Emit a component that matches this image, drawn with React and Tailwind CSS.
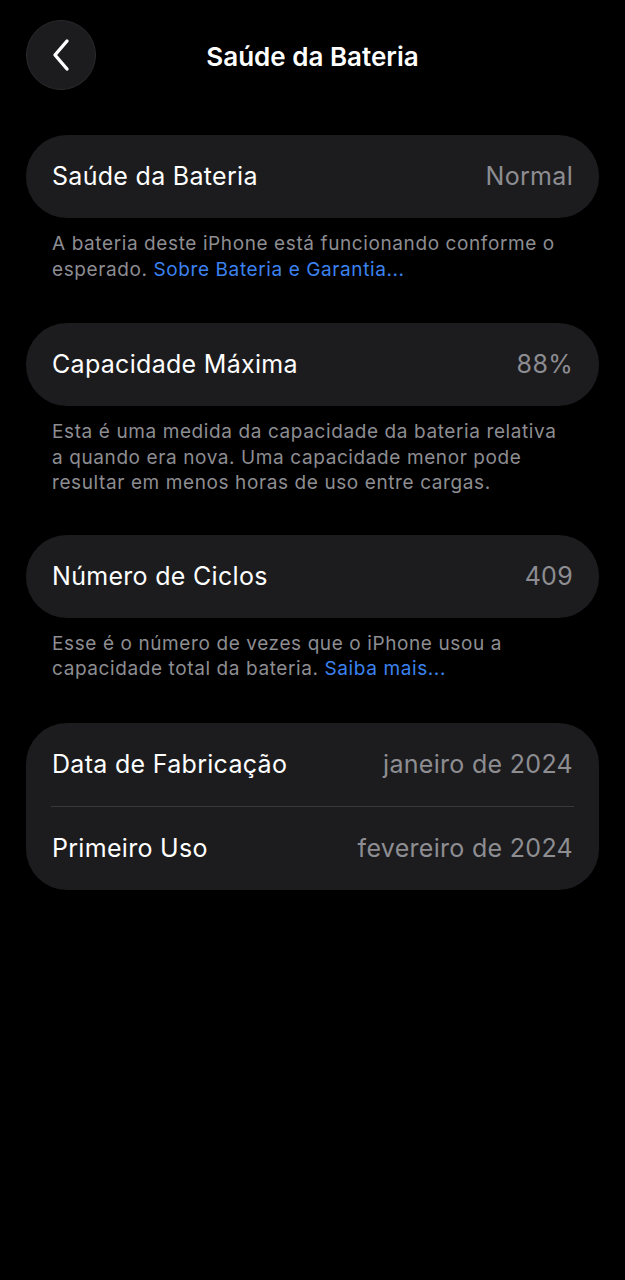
import React from "react";

const font = { fontFamily: "Inter, 'Noto Sans', sans-serif" };

function Row({ label, value }) {
  return (
    <div className="flex h-[83px] items-center justify-between px-[26px] pt-px">
      <span className="text-[25px] tracking-[0.3px] text-white">{label}</span>
      <span className="text-[25px] tracking-[0.3px] text-[#8d8d92]">{value}</span>
    </div>
  );
}

function Footer({ children }) {
  return (
    <div className="mt-[13px] px-[26px] text-[19px] leading-[25.5px] tracking-[0.6px] text-[#8d8d92]">
      {children}
    </div>
  );
}

export default function App() {
  return (
    <div className="min-h-[1280px] w-full bg-black" style={font}>
      <div className="relative flex h-[110px] items-start justify-center pt-[20px]">
        <div className="absolute left-[26px] top-[20px] flex h-[70px] w-[70px] items-center justify-center rounded-full border border-[#2a2a2c] bg-[#1c1c1e]">
          <svg width="22" height="34" viewBox="0 0 22 34" fill="none">
            <path d="M17 3 L5 17 L17 31" stroke="white" strokeWidth="3.4" strokeLinecap="round" strokeLinejoin="round" />
          </svg>
        </div>
        <div className="flex h-[72px] items-center text-[26px] font-semibold text-white">
          Saúde da Bateria
        </div>
      </div>

      <div className="px-[26px] pt-[25px]">
        <div className="rounded-[41px] bg-[#1c1c1e]">
          <Row label="Saúde da Bateria" value="Normal" />
        </div>
        <Footer>
          A bateria deste iPhone está funcionando conforme o esperado.{" "}
          <span className="text-[#3b82f0]">Sobre Bateria e Garantia...</span>
        </Footer>

        <div className="mt-[41px] rounded-[41px] bg-[#1c1c1e]">
          <Row label="Capacidade Máxima" value="88%" />
        </div>
        <Footer>
          Esta é uma medida da capacidade da bateria relativa a quando era nova. Uma capacidade menor pode resultar em menos horas de uso entre cargas.
        </Footer>

        <div className="mt-[39px] rounded-[41px] bg-[#1c1c1e]">
          <Row label="Número de Ciclos" value="409" />
        </div>
        <Footer>
          Esse é o número de vezes que o iPhone usou a capacidade total da bateria.{" "}
          <span className="text-[#3b82f0]">Saiba mais...</span>
        </Footer>

        <div className="mt-[41px] rounded-[41px] bg-[#1c1c1e]">
          <Row label="Data de Fabricação" value="janeiro de 2024" />
          <div className="mx-[25px] h-px bg-[#38383a]" />
          <Row label="Primeiro Uso" value="fevereiro de 2024" />
        </div>
      </div>
    </div>
  );
}
